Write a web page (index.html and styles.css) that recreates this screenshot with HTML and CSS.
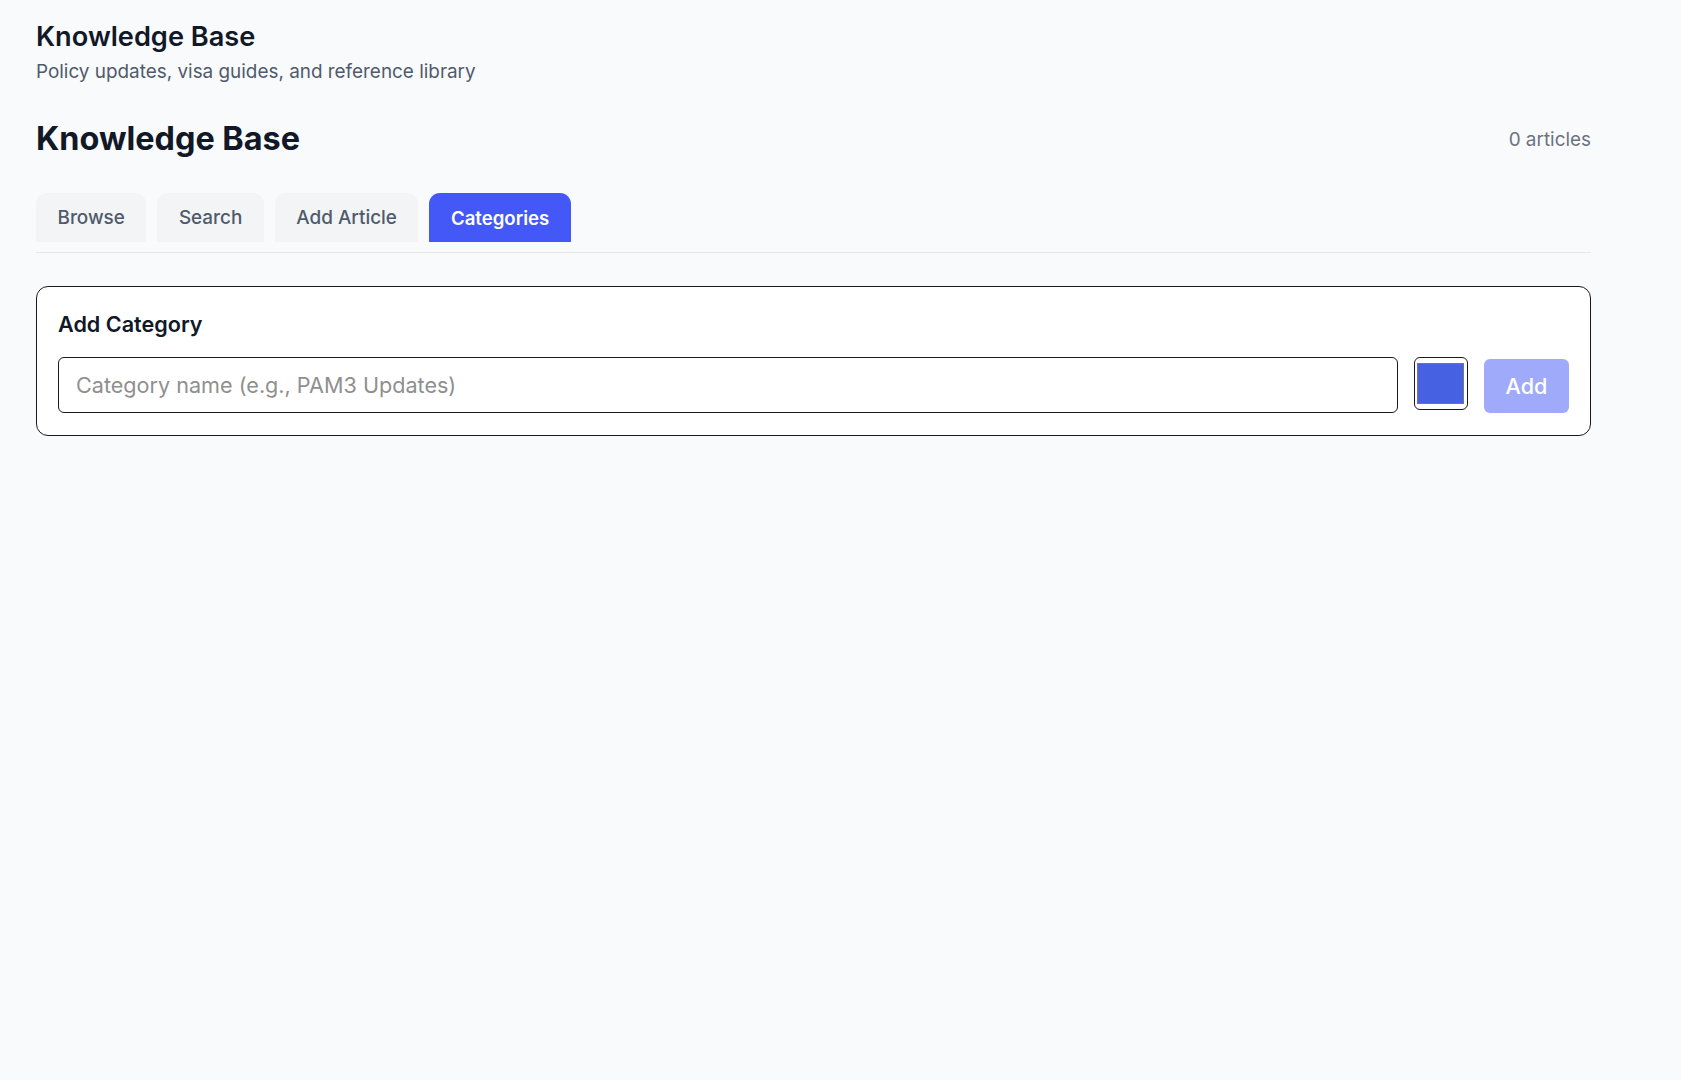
FILE: index.html
```html
<!DOCTYPE html>
<html>

<head>
  <meta charset="UTF-8" />
  <title>Knowledge Base</title>
  <link rel="stylesheet" href="styles.css">
</head>

<body>
  <div class="page">
    <header class="page-head">
      <h1>Knowledge Base</h1>
      <p>Policy updates, visa guides, and reference library</p>
    </header>

    <div class="kb-head">
      <h2>Knowledge Base</h2>
      <span class="kb-count">0 articles</span>
    </div>

    <div class="tabs">
      <button class="tab" type="button">Browse</button>
      <button class="tab" type="button">Search</button>
      <button class="tab" type="button">Add Article</button>
      <button class="tab active" type="button">Categories</button>
    </div>

    <div class="card">
      <h3>Add Category</h3>
      <div class="add-row">
        <input class="name-input" type="text" placeholder="Category name (e.g., PAM3 Updates)" />
        <input class="color-input" type="color" value="#4661e2" />
        <button class="add-btn" type="button" disabled>Add</button>
      </div>
    </div>
  </div>
</body>

</html>
```

FILE: styles.css
```css
* {
  box-sizing: border-box;
}

body {
  margin: 0;
  min-height: 1080px;
  background-color: #f9fafb;
  font-family: Inter, "Liberation Sans", sans-serif;
  color: #111827;
}

.page {
  width: 1555px;
  margin-left: 36px;
  padding-top: 21px;
}

/*page title*/
.page-head h1 {
  margin: 0;
  font-size: 27.2px;
  line-height: 32px;
  font-weight: 600;
}

.page-head p {
  margin: 5px 0 0;
  font-size: 18.9px;
  line-height: 28px;
  color: #4f5a6b;
}

.kb-head {
  display: flex;
  justify-content: space-between;
  align-items: center;
  margin-top: 31px;
}

.kb-head h2 {
  margin: 0;
  font-size: 32.4px;
  line-height: 44px;
  font-weight: 700;
}

.kb-count {
  font-size: 18.9px;
  color: #6b7280;
}

/*tabs*/
.tabs {
  display: flex;
  gap: 11px;
  margin-top: 32px;
  padding-bottom: 10px;
  border-bottom: 1px solid #e5e7eb;
}

.tab {
  height: 49px;
  padding: 0 21.5px;
  border: 0;
  border-radius: 11px 11px 0 0;
  background-color: #f3f4f6;
  font-family: inherit;
  font-size: 18.9px;
  font-weight: 500;
  color: #4f5a6b;
}

.tab.active {
  background-color: #4358f6;
  color: #fff;
  font-size: 18.6px;
  font-weight: 600;
}

/*add category card*/
.card {
  margin-top: 33px;
  padding: 21px 21px 22px;
  background-color: #fff;
  border: 1px solid #1a1a1a;
  border-radius: 12px;
}

.card h3 {
  margin: 0 0 19px;
  padding-top: 2px;
  font-size: 21.6px;
  line-height: 28px;
  font-weight: 600;
}

.add-row {
  display: flex;
  gap: 16px;
  align-items: flex-start;
}

.name-input {
  flex: 1;
  height: 56px;
  padding: 0 17px;
  border: 1px solid #1a1a1a;
  border-radius: 6px;
  font-family: inherit;
  font-size: 21.6px;
  color: #111827;
}

.name-input::placeholder {
  color: #8f8f8f;
}

.color-input {
  width: 54px;
  height: 53px;
  padding: 0;
  background-color: #fff;
  border: 1px solid #1a1a1a;
  border-radius: 6px;
}

.color-input::-webkit-color-swatch-wrapper {
  padding: 5px 3px 5px 2px;
}

.add-btn {
  width: 85px;
  height: 54px;
  margin-top: 2px;
  border: 0;
  border-radius: 6px;
  background-color: #4358f6;
  opacity: 0.5;
  font-family: inherit;
  font-size: 21.6px;
  font-weight: 500;
  color: #fff;
}
```
